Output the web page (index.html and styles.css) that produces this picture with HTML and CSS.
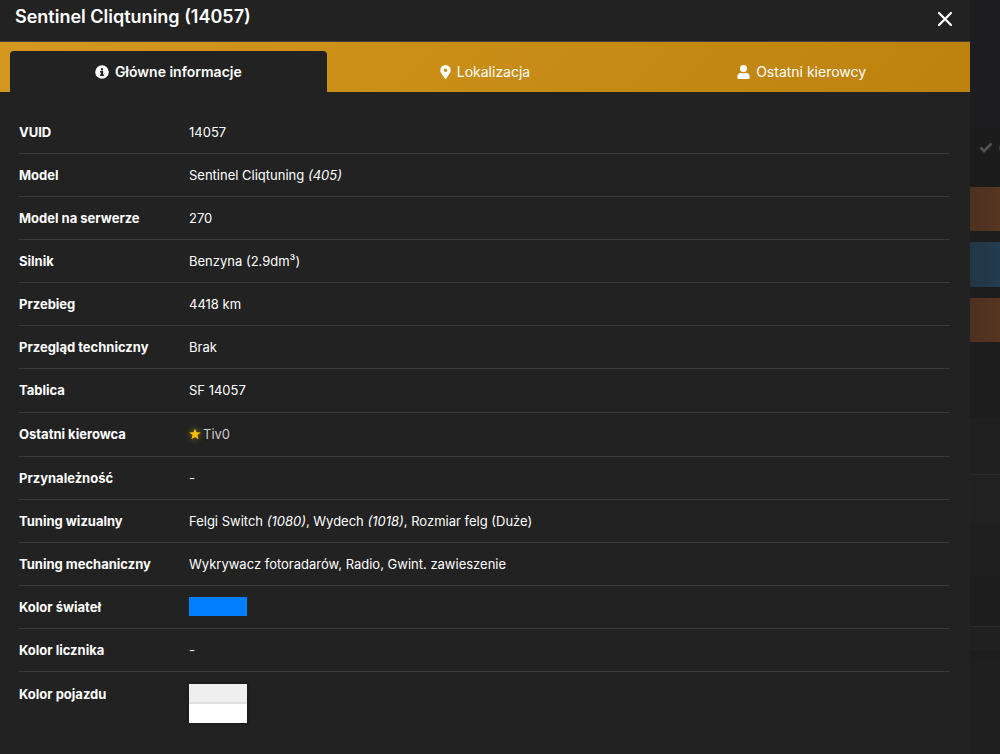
FILE: index.html
```html
<!DOCTYPE html>
<html lang="pl">
<head>
<meta charset="utf-8">
<meta name="viewport" content="width=device-width, initial-scale=1">
<title>Sentinel Cliqtuning (14057)</title>
<link rel="stylesheet" href="styles.css">
</head>
<body>
<div class="layout">
  <main class="modal">
    <header class="modal-header">
      <h1 class="modal-title">Sentinel Cliqtuning (14057)</h1>
      <button class="modal-close" type="button" aria-label="Zamknij">
        <svg viewBox="0 0 16 16" width="16" height="16"><path d="M2 2L14 14M14 2L2 14" fill="none" stroke="currentColor" stroke-width="2.2" stroke-linecap="round"/></svg>
      </button>
    </header>
    <nav class="tabs">
      <button class="tab tab-active" type="button">
        <svg viewBox="0 0 512 512" width="14" height="14"><path fill="currentColor" fill-rule="evenodd" d="M256 8a248 248 0 1 0 0 496a248 248 0 1 0 0-496zM256 112a44 44 0 1 1 0 88a44 44 0 1 1 0-88zM198 222h88c8 0 14 6 14 14v110h14c8 0 14 6 14 14v24c0 8-6 14-14 14H198c-8 0-14-6-14-14v-24c0-8 6-14 14-14h14v-72h-14c-8 0-14-6-14-14v-24c0-8 6-14 14-14z"/></svg>
        Główne informacje
      </button>
      <button class="tab" type="button">
        <svg viewBox="0 0 384 512" width="11" height="14"><path fill="currentColor" fill-rule="evenodd" d="M172 502C27 291 0 270 0 192a192 192 0 0 1 384 0c0 78-27 99-172 310a24 24 0 0 1-40 0zM192 260a66 66 0 1 0 0-132a66 66 0 1 0 0 132z"/></svg>
        Lokalizacja
      </button>
      <button class="tab" type="button">
        <svg viewBox="0 0 448 512" width="13" height="14"><path fill="currentColor" d="M224 256a128 128 0 1 0 0-256a128 128 0 1 0 0 256zM314 288h-17a174 174 0 0 1-146 0h-17A134 134 0 0 0 0 422v42c0 27 21 48 48 48h352c27 0 48-21 48-48v-42A134 134 0 0 0 314 288z"/></svg>
        Ostatni kierowcy
      </button>
    </nav>
    <table class="details">
      <tbody class="details-body">
        <tr class="row"><th scope="row">VUID</th><td>14057</td></tr>
        <tr class="row"><th scope="row">Model</th><td>Sentinel Cliqtuning <em>(405)</em></td></tr>
        <tr class="row"><th scope="row">Model na serwerze</th><td>270</td></tr>
        <tr class="row"><th scope="row">Silnik</th><td>Benzyna (2.9dm³)</td></tr>
        <tr class="row"><th scope="row">Przebieg</th><td>4418 km</td></tr>
        <tr class="row"><th scope="row">Przegląd techniczny</th><td>Brak</td></tr>
        <tr class="row"><th scope="row">Tablica</th><td>SF 14057</td></tr>
        <tr class="row"><th scope="row">Ostatni kierowca</th><td><a class="driver" href="#"><svg class="star" viewBox="0 0 24 24" width="12" height="12"><path fill="currentColor" d="M12 1l3 7.600 8.500.4-6.700 5.200 2.300 8.200L12 17.800l-7.100 4.600 2.300-8.200L.5 9l8.500-.4z"/></svg>Tiv0</a></td></tr>
        <tr class="row"><th scope="row">Przynależność</th><td>-</td></tr>
        <tr class="row"><th scope="row">Tuning wizualny</th><td>Felgi Switch <em>(1080)</em>, Wydech <em>(1018)</em>, Rozmiar felg (Duże)</td></tr>
        <tr class="row"><th scope="row">Tuning mechaniczny</th><td>Wykrywacz fotoradarów, Radio, Gwint. zawieszenie</td></tr>
        <tr class="row"><th scope="row">Kolor świateł</th><td><div class="swatch swatch-blue"></div></td></tr>
        <tr class="row"><th scope="row">Kolor licznika</th><td>-</td></tr>
        <tr class="row row-last"><th scope="row">Kolor pojazdu</th><td><div class="swatches"><div class="swatch swatch-grey"></div><div class="swatch swatch-white"></div></div></td></tr>
      </tbody>
    </table>
  </main>
  <aside class="backdrop">
    <div class="backdrop-check">
      <svg viewBox="0 0 14 11" width="14" height="11"><path d="M1.500 5.500L5 9L12.500 1.500" fill="none" stroke="currentColor" stroke-width="2.800"/></svg>
      <span class="backdrop-dot"></span>
    </div>
    <div class="bar bar-brown"></div>
    <div class="bar bar-blue"></div>
    <div class="bar bar-brown"></div>
    <div class="panel"></div>
    <div class="panel panel-tall"></div>
    <div class="panel-foot"></div>
  </aside>
</div>
</body>
</html>
```
FILE: styles.css
```css
* {
  box-sizing: border-box;
}

body {
  margin: 0;
  background: #1e1e1e;
  color: #fff;
  font: 400 13px/20px Inter, "Noto Sans", sans-serif;
}

.layout {
  display: grid;
  grid-template-columns: 1fr 30px;
  min-height: 100vh;
}

.modal {
  display: flex;
  flex-direction: column;
  background: #222;
}

.modal-header {
  display: flex;
  align-items: center;
  justify-content: space-between;
  padding: 5px 16px 12px 15px;
  border-bottom: 1px solid #3e3e3e;
}

.modal-title {
  margin: 0;
  font-size: 18px;
  font-weight: 600;
  line-height: 24px;
}

.modal-close {
  display: flex;
  padding: 4px 1px 0;
  border: 0;
  background: none;
  color: #fff;
}

.tabs {
  display: grid;
  grid-template-columns: repeat(3, 1fr);
  padding: 9px 10px 0;
  background: linear-gradient(135deg, #d4981f, #bd820d);
}

.tab {
  display: flex;
  align-items: center;
  justify-content: center;
  gap: 6px;
  height: 41px;
  padding: 0;
  border: 0;
  border-radius: 4px 4px 0 0;
  background: none;
  color: #fff;
  font: inherit;
  font-size: 14px;
}

.tab-active {
  background: #222;
  font-weight: 600;
}

.details {
  display: flex;
  flex: 1;
  padding: 19px 20px 31px 19px;
}

.details-body {
  display: flex;
  flex: 1;
  flex-direction: column;
}

.row {
  display: grid;
  flex: 1 0 auto;
  grid-template-columns: 170px 1fr;
  padding-top: 11px;
  padding-bottom: 11px;
  border-bottom: 1px solid #3a3a3a;
}

.row-last {
  flex: none;
  padding-top: 12px;
  padding-bottom: 0;
  border-bottom: 0;
}

.row th,
.row td {
  padding: 0;
  text-align: left;
}

.row th {
  font-weight: 700;
}

.row td {
  color: #fff;
}

.driver {
  display: inline-flex;
  align-items: center;
  gap: 2px;
  color: #ccc;
  text-decoration: none;
}

.star {
  color: #ffc107;
  filter: drop-shadow(0 0 3px #ffc10799);
}

.swatch {
  width: 58px;
  height: 19px;
}

.swatches {
  width: 58px;
  box-shadow: 0 0 3px #111;
}

.swatch-blue {
  background: #0080ff;
}

.swatch-grey {
  height: 20px;
  border-bottom: 2px solid #e0e0e0;
  background: #eee;
}

.swatch-white {
  background: #fff;
}

.backdrop {
  display: flex;
  flex-direction: column;
  overflow: hidden;
  background: #1d1d1d;
}

.backdrop-check {
  display: flex;
  align-items: center;
  gap: 6px;
  height: 187px;
  padding: 108px 0 0 9px;
  background: linear-gradient(#1d1d1f 126px, #1c1c1c 126px);
  color: #515151;
}

.backdrop-check svg {
  flex: none;
}

.backdrop-dot {
  flex: none;
  width: 8px;
  height: 8px;
  border: 2px solid #414141;
  border-radius: 50%;
}

.bar {
  height: 44px;
  margin-bottom: 11px;
}

.bar-brown {
  background: linear-gradient(90deg, #4c3020, #573521);
}

.bar-blue {
  height: 45px;
  background: linear-gradient(90deg, #213544, #233c50);
}

.panel {
  height: 57px;
  margin-top: 65px;
  border-bottom: 1px solid #2b2b2b;
  background: #202020;
}

.panel-tall {
  height: 152px;
  margin-top: 0;
  background: linear-gradient(#212121 48px, #1f1f1f 48px 100px, #1d1d1d 100px);
}

.panel-foot {
  flex: 1;
  background: linear-gradient(#202020 24px, #1c1c1c 24px, #1f1f1f 40px);
}
```
